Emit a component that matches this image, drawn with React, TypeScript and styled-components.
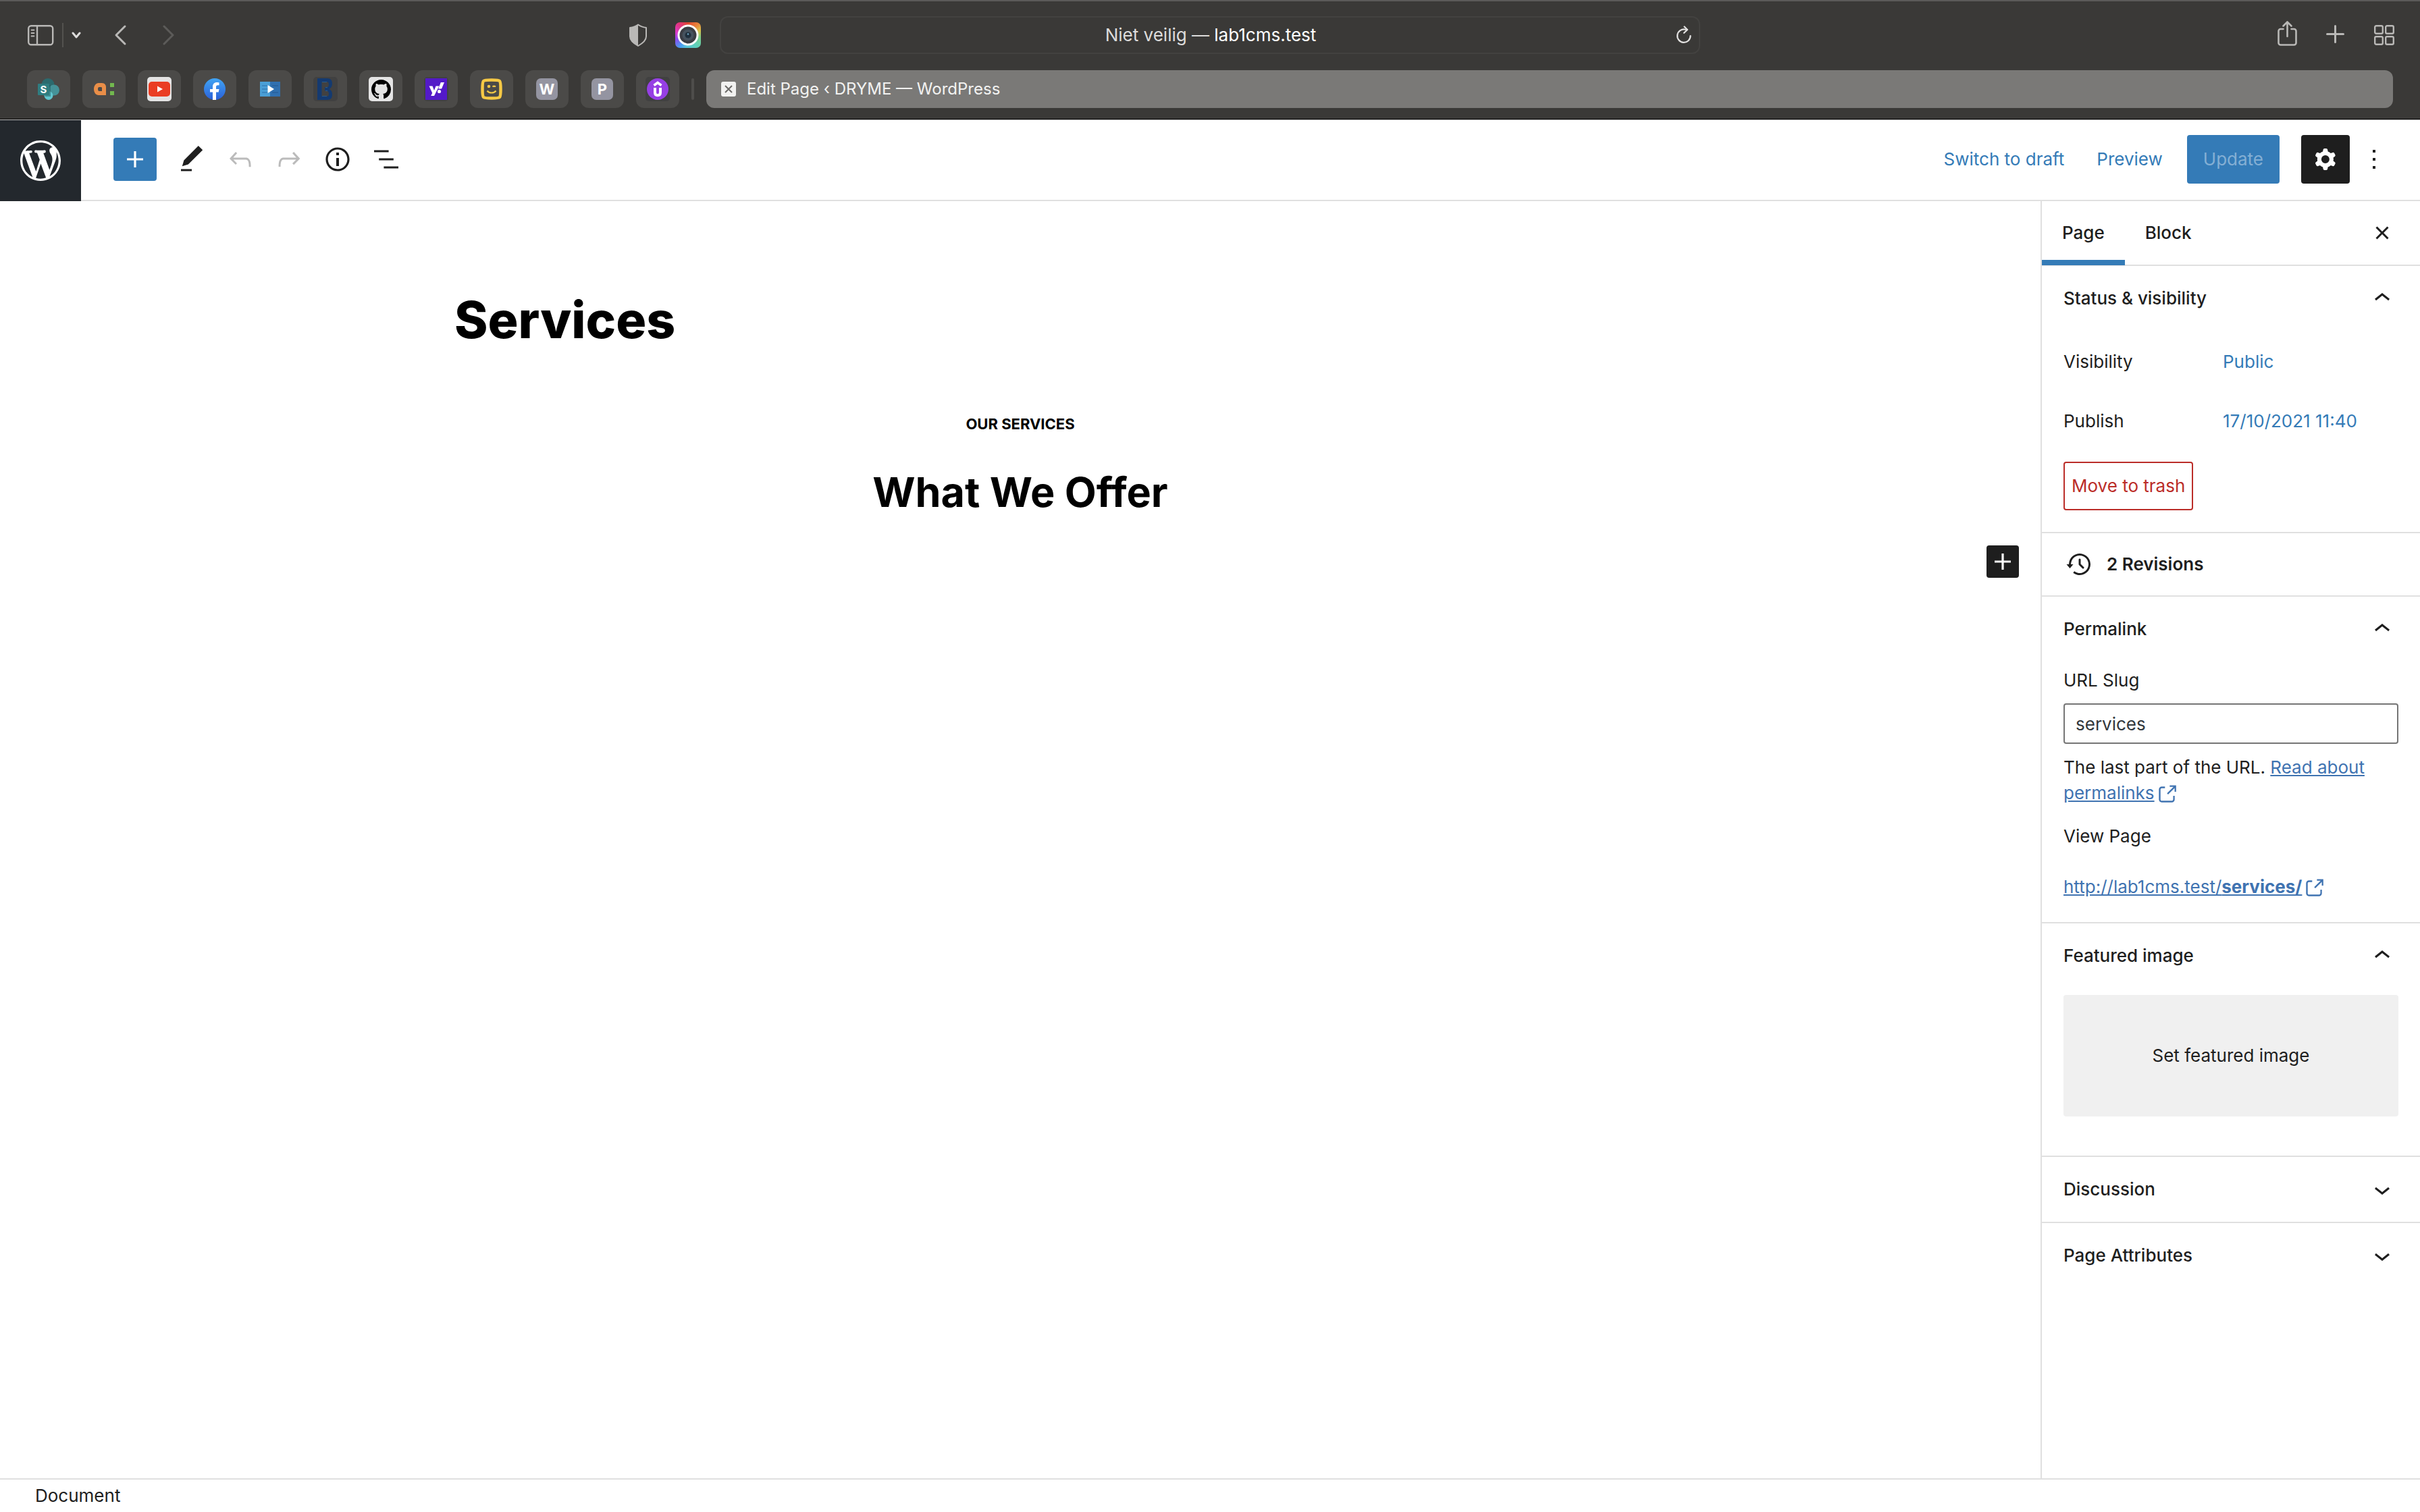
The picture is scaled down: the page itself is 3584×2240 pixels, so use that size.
import React from "react";
import styled, { createGlobalStyle } from "styled-components";

const blue = "#347bb7";
const ink = "#1e1e1e";
const line = "#e0e0e0";
const chromeIcon = "#b9b8b6";

const GlobalStyle = createGlobalStyle`
  * { box-sizing: border-box; }
  body { margin: 0; background: #fff; }
  body, button, input {
    font-family: Inter, "Liberation Sans", sans-serif;
    font-size: 26px;
    line-height: 36px;
    color: ${ink};
  }
  button { margin: 0; padding: 0; border: 0; background: none; cursor: pointer; }
  h1, h2, h3, p { margin: 0; }
  svg { display: block; flex: none; }
`;

const Page = styled.div`
  display: flex;
  flex-direction: column;
  min-height: 100vh;
`;

/* Browser window */
const Chrome = styled.header`
  background: #3a3937;
  border-top: 2px solid #5b5a59;
  border-bottom: 1px solid #000;
`;
const ChromeBar = styled.div`
  display: grid;
  grid-template-columns: 1fr 1452px 1fr;
  align-items: center;
  padding: 22px 38px 24px;
`;
const ChromeGroup = styled.div<{ $end?: boolean }>`
  display: flex;
  align-items: center;
  justify-content: ${(p) => (p.$end ? "flex-end" : "flex-start")};
  gap: ${(p) => (p.$end ? 42 : 12)}px;
`;
const ChromeButton = styled.button<{ $before?: number }>`
  display: flex;
  margin-left: ${(p) => p.$before ?? 0}px;
`;
const ChromeRule = styled.span`
  width: 2px;
  height: 36px;
  background: #53524f;
`;
const Extensions = styled.div`
  display: flex;
  align-items: center;
  gap: 40px;
  margin-left: auto;
  padding-right: 28px;
`;
const AddressBar = styled.div`
  display: flex;
  align-items: center;
  height: 56px;
  padding: 0 10px 0 36px;
  border: 2px solid #434240;
  border-radius: 12px;
`;
const Address = styled.p`
  flex: 1;
  text-align: center;
  color: #dddcdb;
`;
const Host = styled.span`
  color: #fff;
`;
const TabStrip = styled.nav`
  display: flex;
  align-items: center;
  gap: 18px;
  padding: 0 40px 16px;
`;
const PinnedTab = styled.button`
  display: flex;
  align-items: center;
  justify-content: center;
  width: 64px;
  height: 56px;
  border-radius: 12px;
  background: #4b4a48;
`;
const Favicon = styled.span<{ $bg?: string }>`
  display: flex;
  align-items: center;
  justify-content: center;
  width: 36px;
  height: 36px;
  border-radius: 5px;
  background: ${(p) => p.$bg ?? "transparent"};
`;
const LetterIcon = styled.span`
  width: 32px;
  height: 32px;
  border-radius: 7px;
  background: #9494a1;
  color: #fff;
  font-size: 22px;
  font-weight: 700;
  line-height: 32px;
  text-align: center;
`;
const TabRule = styled.span`
  width: 4px;
  height: 32px;
  border-radius: 2px;
  background: #4e4d4b;
`;
const ActiveTab = styled.div`
  display: flex;
  flex: 1;
  align-items: center;
  gap: 16px;
  height: 56px;
  padding: 0 22px;
  border-radius: 12px;
  background: #7a7977;
  color: #f2f2f1;
  font-size: 24px;
`;
const CloseTab = styled.button`
  display: flex;
`;

/* Editor toolbar */
const Toolbar = styled.div`
  display: flex;
  align-items: center;
  height: 121px;
  padding-bottom: 2px;
  border-top: 1px solid #bdbdbd;
  border-bottom: 2px solid ${line};
`;
const HomeLink = styled.a`
  display: flex;
  align-items: center;
  justify-content: center;
  width: 120px;
  height: 120px;
  align-self: flex-start;
  background: #23282d;
`;
const Tools = styled.div`
  display: flex;
  align-items: center;
  gap: 8px;
  padding-left: 48px;
`;
const Tool = styled.button<{ $faded?: boolean }>`
  display: flex;
  align-items: center;
  justify-content: center;
  width: 64px;
  height: 64px;
  color: ${(p) => (p.$faded ? "#bbb" : ink)};
`;
const AddTool = styled(Tool)`
  margin-right: 12px;
  border-radius: 4px;
  background: ${blue};
  color: #fff;
`;
const Actions = styled.div`
  display: flex;
  align-items: center;
  margin-left: auto;
  padding-right: 44px;
`;
const TextButton = styled.button`
  padding: 0 24px;
  color: ${blue};
`;
const UpdateButton = styled.button`
  height: 72px;
  margin: 0 32px 0 12px;
  padding: 0 24px;
  border-radius: 4px;
  background: ${blue};
  color: #84afd4;
`;
const SettingsButton = styled.button`
  display: flex;
  align-items: center;
  justify-content: center;
  width: 72px;
  height: 72px;
  margin-right: 12px;
  border-radius: 4px;
  background: ${ink};
  color: #fff;
`;
const MoreButton = styled.button`
  display: flex;
`;

/* Canvas */
const Workspace = styled.div`
  display: flex;
  flex: 1;
`;
const Canvas = styled.main`
  flex: 1;
  padding: 128px 32px 0;
  color: #000;
`;
const Column = styled.div`
  max-width: 1676px;
  margin: 0 auto;
`;
const PostTitle = styled.h1`
  font-size: 75px;
  font-weight: 800;
  line-height: 96px;
`;
const Kicker = styled.p`
  margin-top: 88px;
  font-size: 22px;
  font-weight: 700;
  line-height: 36px;
  text-align: center;
`;
const BlockHeading = styled.h2`
  margin-top: 44px;
  font-size: 61px;
  font-weight: 700;
  line-height: 78px;
  text-align: center;
`;
const InserterRow = styled.div`
  display: flex;
  justify-content: flex-end;
  margin-top: 40px;
`;
const Inserter = styled.button`
  display: flex;
  border-radius: 4px;
  background: ${ink};
  color: #fff;
`;

/* Settings sidebar */
const Sidebar = styled.aside`
  width: 562px;
  border-left: 2px solid ${line};
`;
const SidebarTabs = styled.div`
  display: flex;
  align-items: center;
  height: 96px;
  padding-right: 32px;
  border-bottom: 2px solid ${line};
`;
const SidebarTab = styled.button<{ $active?: boolean }>`
  height: 96px;
  padding: 0 30px;
  font-weight: 500;
  box-shadow: ${(p) => (p.$active ? `inset 0 -8px 0 ${blue}` : "none")};
`;
const CloseSidebar = styled.button`
  display: flex;
  margin-left: auto;
`;
const Panel = styled.section`
  border-bottom: 2px solid ${line};
  &:last-child { border-bottom: 0; }
`;
const PanelToggle = styled.button`
  display: flex;
  align-items: center;
  justify-content: space-between;
  width: 100%;
  height: 96px;
  padding: 0 32px;
  font-weight: 500;
  text-align: left;
`;
const PanelBody = styled.div<{ $bottom: number }>`
  padding: 10px 32px ${(p) => p.$bottom}px;
`;
const Row = styled.div`
  display: grid;
  grid-template-columns: 204px 1fr;
  align-items: center;
  height: 72px;
  margin-bottom: 16px;
`;
const RowValue = styled.button`
  justify-self: start;
  margin-left: 32px;
  color: ${blue};
  white-space: nowrap;
`;
const TrashButton = styled.button`
  height: 72px;
  margin-top: 8px;
  padding: 0 10px;
  border: 2px solid #bb2d28;
  border-radius: 4px;
  color: #bb2d28;
`;
const Revisions = styled.button`
  display: flex;
  align-items: center;
  gap: 16px;
  width: 100%;
  height: 92px;
  padding: 0 32px;
  font-weight: 600;
`;
const FieldLabel = styled.label`
  display: block;
`;
const SlugInput = styled.input`
  display: block;
  width: 100%;
  height: 60px;
  margin: 16px 0;
  padding: 0 16px;
  border: 2px solid #757575;
  border-radius: 4px;
  color: #32373c;
`;
const Help = styled.p`
  line-height: 38px;
`;
const ViewLabel = styled.h3`
  margin: 26px 0 38px;
  font-size: 26px;
  font-weight: 400;
`;
const Link = styled.a`
  color: #3f73b1;
  text-decoration: underline;
  svg {
    display: inline-block;
    vertical-align: middle;
  }
`;
const FeaturedButton = styled.button`
  width: 100%;
  height: 180px;
  border-radius: 4px;
  background: #f0f0f0;
`;

const Footer = styled.footer`
  height: 50px;
  padding: 6px 52px;
  border-top: 2px solid ${line};
  background: #fff;
`;

const paths = {
  plus: "M18 11.2h-5.2V6h-1.6v5.2H6v1.6h5.2V18h1.6v-5.2H18z",
  edit: "M20.1 5.1L16.9 2 6.2 12.7l-1.3 4.4 4.5-1.3L20.1 5.1zM4 20.8h8v-1.5H4v1.5z",
  undo: "M18.3 11.7c-.6-.6-1.4-.9-2.3-.9H6.7l2.9-3.3-1.1-1-4.5 5L8.5 16l1-1-2.7-2.7H16c.5 0 .9.2 1.3.5 1 1 1 3.4 1 4.5v.3h1.5v-.2c0-1.5 0-4.3-1.5-5.7z",
  redo: "M15.6 6.5l-1.1 1 2.9 3.3H8c-.9 0-1.7.3-2.3.9-1.4 1.5-1.4 4.2-1.4 5.6v.2h1.5v-.3c0-1.1 0-3.5 1-4.5.3-.3.7-.5 1.3-.5h9.2L14.5 15l1.1 1.1 4.6-4.6-4.6-5z",
  info: "M12 3.2c-4.8 0-8.8 3.9-8.8 8.8 0 4.8 3.9 8.8 8.8 8.8 4.8 0 8.8-3.9 8.8-8.8 0-4.8-4-8.8-8.8-8.8zm0 16c-4 0-7.2-3.3-7.2-7.2C4.8 8 8 4.8 12 4.8s7.2 3.3 7.2 7.2c0 4-3.2 7.2-7.2 7.2zM11 17h2v-6h-2v6zm0-8h2V7h-2v2z",
  list: "M13.8 5.2H3v1.5h10.8V5.2zm-3.6 12v1.5H21v-1.5H10.2zm7.2-6H6.6v1.5h10.8v-1.5z",
  cog: "M10.289 4.836A1 1 0 0111.275 4h1.306a1 1 0 01.987.836l.244 1.466c.787.26 1.503.679 2.108 1.218l1.393-.522a1 1 0 011.216.437l.653 1.13a1 1 0 01-.23 1.273l-1.148.944a6.025 6.025 0 010 2.435l1.149.946a1 1 0 01.23 1.272l-.653 1.13a1 1 0 01-1.216.437l-1.394-.522c-.605.54-1.32.958-2.108 1.218l-.244 1.466a1 1 0 01-.987.836h-1.306a1 1 0 01-.986-.836l-.244-1.466a5.995 5.995 0 01-2.108-1.218l-1.394.522a1 1 0 01-1.217-.436l-.653-1.131a1 1 0 01.23-1.272l1.149-.946a6.026 6.026 0 010-2.435l-1.148-.944a1 1 0 01-.23-1.272l.653-1.131a1 1 0 011.217-.437l1.393.522a5.994 5.994 0 012.108-1.218l.244-1.466zM14.929 12a3 3 0 11-6 0 3 3 0 016 0z",
  more: "M13 19h-2v-2h2v2zm0-6h-2v-2h2v2zm0-6h-2V5h2v2z",
  close: "M12 13.06l3.712 3.713 1.061-1.06L13.061 12l3.712-3.712-1.06-1.06L12 10.938 8.288 7.227l-1.061 1.06L10.939 12l-3.712 3.712 1.06 1.061L12 13.061z",
  up: "M6.5 12.4L12 8l5.5 4.4-.9 1.2L12 10l-4.5 3.6-1-1.2z",
  down: "M17.5 11.6L12 16l-5.5-4.4.9-1.2L12 14l4.5-3.6 1 1.2z",
  backup: "M5.5 12h1.75l-2.5 3-2.5-3H4a8 8 0 113.134 6.35l.907-1.194A6.5 6.5 0 105.5 12zm9.53 1.97l-2.28-2.28V8.5a.75.75 0 00-1.5 0V12a.747.747 0 00.218.529l1.282-.84-1.28.842 2.5 2.5a.75.75 0 101.06-1.061z",
  external: "M18.2 17c0 .7-.6 1.2-1.2 1.2H7c-.7 0-1.2-.6-1.2-1.2V7c0-.7.6-1.2 1.2-1.2h3.2V4.2H7C5.5 4.2 4.2 5.5 4.2 7v10c0 1.5 1.2 2.8 2.8 2.8h10c1.5 0 2.8-1.2 2.8-2.8v-3.6h-1.5V17zM14.9 3v1.5h3.7l-6.4 6.4 1.1 1.1 6.4-6.4v3.7h1.5V3h-6.3z",
};

const Icon = ({ name, size = 48 }: { name: keyof typeof paths; size?: number }) => (
  <svg width={size} height={size} viewBox="0 0 24 24" fill="currentColor" aria-hidden="true">
    <path d={paths[name]} fillRule={name === "cog" ? "evenodd" : undefined} />
  </svg>
);

const WordPressLogo = () => (
  <svg width="72" height="72" viewBox="-2 -2 24 24" fill="#fff" aria-hidden="true">
    <path d="M20 10c0-5.51-4.49-10-10-10C4.48 0 0 4.49 0 10c0 5.52 4.48 10 10 10 5.51 0 10-4.48 10-10zM7.78 15.37L4.37 6.22c.55-.02 1.17-.08 1.17-.08.5-.06.44-1.13-.06-1.11 0 0-1.45.11-2.37.11-.18 0-.37 0-.58-.01C4.12 2.69 6.87 1.11 10 1.11c2.33 0 4.45.87 6.05 2.34-.68-.11-1.65.39-1.65 1.58 0 .74.45 1.36.9 2.1.35.61.55 1.36.55 2.46 0 1.49-1.4 5-1.4 5l-3.03-8.37c.54-.02.82-.17.82-.17.5-.05.44-1.25-.06-1.22 0 0-1.44.12-2.38.12-.87 0-2.33-.12-2.33-.12-.5-.03-.56 1.2-.06 1.22l.92.08 1.26 3.41zM17.41 10c.24-.64.74-1.87.43-4.25.7 1.29 1.05 2.71 1.05 4.25 0 3.29-1.73 6.24-4.4 7.78.97-2.59 1.94-5.2 2.92-7.78zM6.1 18.09C3.12 16.65 1.11 13.53 1.11 10c0-1.3.23-2.48.72-3.59C3.25 10.3 4.67 14.2 6.1 18.09zm4.03-6.63l2.58 6.98c-.86.29-1.76.45-2.71.45-.79 0-1.57-.11-2.29-.33.81-2.38 1.62-4.74 2.42-7.1z" />
  </svg>
);

const SidebarIcon = () => (
  <svg width="42" height="32" viewBox="0 0 42 32" fill="none" stroke={chromeIcon} strokeWidth="2.4" aria-hidden="true">
    <rect x="4.2" y="2.2" width="36" height="28" rx="4" />
    <path d="M17 2v28" />
    <path d="M8.5 8.500h4M8.500 13h4M8.500 17.500h4" strokeWidth="1.8" strokeLinecap="round" />
  </svg>
);

const Stroke = ({ d, w, h, color = chromeIcon, width = 3 }: { d: string; w: number; h: number; color?: string; width?: number }) => (
  <svg width={w} height={h} viewBox={`0 0 ${w} ${h}`} fill="none" stroke={color} strokeWidth={width} strokeLinecap="round" strokeLinejoin="round" aria-hidden="true">
    <path d={d} />
  </svg>
);

const ShieldIcon = () => (
  <svg width="30" height="36" viewBox="0 0 30 36" fill="none" aria-hidden="true">
    <path d="M15 2.5c4 3 8 4 12 4.500V20c0 6-5 10-12 14C8 30 3 26 3 20V7c4-.5 8-1.500 12-4.500z" stroke={chromeIcon} strokeWidth="2" strokeLinejoin="round" />
    <path d="M15 2v32C8 30 3 26 3 20V7c4-.5 8-2 12-5z" fill={chromeIcon} />
  </svg>
);

const CameraBadge = styled.span`
  display: flex;
  align-items: center;
  justify-content: center;
  width: 38px;
  height: 38px;
  border-radius: 7px;
  background: conic-gradient(from 0deg, #e0452f, #e8803a 40deg, #d9c54c 70deg, #7fd08a 100deg, #5ed0b8 140deg, #58c4dd 190deg, #4a9cf0 215deg, #8a4bee 250deg, #d93bd0 280deg, #e0357d 320deg, #e0452f);
`;

const Lens = () => (
  <svg width="32" height="32" viewBox="0 0 32 32" aria-hidden="true">
    <circle cx="16" cy="16" r="15.500" fill="#fff" />
    <circle cx="16" cy="16" r="12.500" fill="#3b3d44" />
    <circle cx="16" cy="16" r="8.500" fill="#46525e" />
    <circle cx="16" cy="16" r="4.500" fill="#1f2f3d" />
    <circle cx="16" cy="14.500" r="1.300" fill="#6fa3c0" />
  </svg>
);

const SharePoint = () => (
  <svg width="34" height="40" viewBox="0 0 34 40" aria-hidden="true">
    <circle cx="16" cy="13.500" r="9.500" fill="#2c6a6e" />
    <circle cx="25" cy="21.500" r="8" fill="#459399" />
    <circle cx="17" cy="29.500" r="6.500" fill="#60c6cf" />
    <path d="M3 14h17v17H12z" fill="#22575b" opacity=".5" />
    <rect x="1" y="12" width="17" height="17" rx="1" fill="#2f7d81" />
    <text x="9.500" y="26" fill="#fff" fontFamily="Inter, sans-serif" fontSize="15" fontWeight="700" textAnchor="middle">S</text>
  </svg>
);

const ColonLogo = () => (
  <svg width="30" height="18" viewBox="0 0 30 18" aria-hidden="true">
    <path fillRule="evenodd" d="M7 0H12C16 0 18 3 18 6V18H7C3 18 0 14 0 9S3 0 7 0zM8 6C6.500 6 6 7 6 9s.5 3 2 3h4V7.500C12 6.500 11.500 6 10.500 6z" fill="#e98e48" />
    <path d="M24 0h6v6h-6zM24 12h6v6h-6z" fill="#72b84f" />
  </svg>
);

const YouTube = () => (
  <svg width="32" height="22" viewBox="0 0 32 22" aria-hidden="true">
    <rect width="32" height="22" rx="5" fill="#ea3e24" />
    <path d="M13 6.500l8 4.500-8 4.500z" fill="#fff" />
  </svg>
);

const Facebook = () => (
  <svg width="32" height="32" viewBox="0 0 32 32" aria-hidden="true">
    <defs>
      <linearGradient id="fb" x1="0" y1="0" x2="0" y2="1">
        <stop offset="0" stopColor="#41a5f4" />
        <stop offset="1" stopColor="#2b60d8" />
      </linearGradient>
    </defs>
    <circle cx="16" cy="16" r="16" fill="url(#fb)" />
    <path d="M13 32V20.500H9V16h4v-3.500C13 8.500 15.300 6 19.200 6c1.500 0 3.300.3 3.300.3v4h-2c-2 0-2.500 1.200-2.500 2.500V16h4.500l-.8 4.500H18V32z" fill="#fff" />
  </svg>
);

const VideoBook = () => (
  <svg width="30" height="24" viewBox="0 0 30 24" aria-hidden="true">
    <rect y="1" width="15" height="22" fill="#4a9fd6" />
    <rect x="15" y="1" width="15" height="22" fill="#3070b0" />
    <path d="M3 7h9M3 12h9M3 17h9" stroke="#3680bb" strokeWidth="1.500" />
    <path d="M18 7h9M18 17h9" stroke="#275f9b" strokeWidth="1.500" />
    <path d="M11.500 6l9.500 6-9.500 6z" fill="#fff" />
  </svg>
);

const BadgeB = () => (
  <svg width="24" height="32" viewBox="0 0 24 32" aria-hidden="true">
    <path fillRule="evenodd" d="M0 0H14C20 0 22 3 22 8 22 12 20 14.500 17.500 16 20.500 17.500 22 20 22 24 22 29 20 32 14 32H0zM6.500 5v22H13c3 0 4-1 4-4s-1.500-4.500-4-4.500h-2v-5h2c2.500 0 4-1.500 4-4.500s-1-4-4-4z" fill="#143a70" />
    <path d="M7 5.500h7M12 13.500h3M12 18.500h3M7 26.500h7" stroke="#2a5b8c" strokeWidth="1" />
  </svg>
);

const Octocat = () => (
  <svg width="29" height="29" viewBox="0 0 16 16" fill="#000" aria-hidden="true">
    <path d="M8 0C3.580 0 0 3.580 0 8c0 3.540 2.290 6.530 5.470 7.590.4.070.55-.17.55-.38 0-.19-.01-.82-.01-1.490-2.010.37-2.530-.49-2.690-.94-.09-.23-.48-.94-.82-1.130-.28-.15-.68-.52-.01-.53.63-.01 1.080.58 1.230.82.72 1.210 1.870.87 2.330.66.07-.52.28-.87.51-1.070-1.780-.2-3.640-.89-3.640-3.950 0-.87.31-1.590.82-2.150-.08-.2-.36-1.020.08-2.120 0 0 .67-.21 2.200.82.64-.18 1.320-.27 2-.27s1.360.09 2 .27c1.530-1.040 2.200-.82 2.200-.82.44 1.100.16 1.920.08 2.120.51.56.82 1.270.82 2.150 0 3.070-1.870 3.750-3.650 3.950.29.25.54.73.54 1.480 0 1.070-.01 1.930-.01 2.200 0 .21.15.46.55.38A8.010 8.010 0 0016 8c0-4.420-3.580-8-8-8z" />
  </svg>
);

const Yahoo = () => (
  <svg width="32" height="32" viewBox="0 0 32 32" aria-hidden="true">
    <rect width="32" height="32" fill="#5319c8" />
    <path d="M5.500 11.500h5l2.500 6.500 2.500-6.500h4.800L13 26H8.200l2-4.300zM22.800 6h5.200l-4 9.500h-4.800z" fill="#fff" />
    <circle cx="20.500" cy="19.500" r="2.600" fill="#fff" />
  </svg>
);

const Smiley = () => (
  <svg width="32" height="32" viewBox="0 0 32 32" fill="none" aria-hidden="true">
    <path d="M16 2.500c9 0 11 .5 12 1.500s1.500 3 1.500 12-.5 11-1.500 12-3 1.500-12 1.500-11-.5-12-1.500-1.500-3-1.500-12S3 5 4 4s3-1.500 12-1.500z" stroke="#f6c945" strokeWidth="4.500" />
    <circle cx="12" cy="12" r="2.300" fill="#f6c945" />
    <path d="M17.500 12.500c1.200-1 3.300-1 4.500 0M9.500 18.500c3 4 10 4 13 0" stroke="#f6c945" strokeWidth="2.200" />
  </svg>
);

const Udemy = () => (
  <svg width="32" height="32" viewBox="0 0 32 32" fill="none" aria-hidden="true">
    <circle cx="16" cy="16" r="16" fill="#963fe4" />
    <path d="M10.500 10.500L16 6.500l5.500 4" stroke="#fff" strokeWidth="3.600" />
    <path d="M12 14v7c0 2.500 1.500 4.200 4 4.200s4-1.700 4-4.200v-7" stroke="#fff" strokeWidth="4" />
  </svg>
);

const CloseBadge = () => (
  <svg width="22" height="22" viewBox="0 0 22 22" aria-hidden="true">
    <rect width="22" height="22" rx="3" fill="#f2f2f1" />
    <path d="M6 6l10 10M16 6L6 16" stroke="#6b6a68" strokeWidth="2" />
  </svg>
);

const ReloadIcon = () => (
  <svg width="24" height="28" viewBox="0 0 24 28" fill="none" stroke="#e3e2e1" strokeWidth="2.200" strokeLinecap="round" strokeLinejoin="round" aria-hidden="true">
    <path d="M21.500 15A9.700 9.700 0 1 1 14 5.700L16.500 6" />
    <path d="M12.500 1.500l4.500 4.500-5 4.800" />
  </svg>
);

const ShareIcon = () => (
  <svg width="30" height="42" viewBox="0 0 30 42" fill="none" stroke={chromeIcon} strokeWidth="2.600" strokeLinecap="round" strokeLinejoin="round" aria-hidden="true">
    <path d="M9.500 12H5.500a3 3 0 0 0-3 3V32.500a3 3 0 0 0 3 3h20a3 3 0 0 0 3-3V15a3 3 0 0 0-3-3h-4" />
    <path d="M15.500 23V2M9.500 7.500l6-6 6 6" />
  </svg>
);

const GridIcon = () => (
  <svg width="30" height="30" viewBox="0 0 30 30" fill="none" stroke={chromeIcon} strokeWidth="2.400" aria-hidden="true">
    <rect x="1.200" y="1.200" width="11.600" height="11.600" rx="2" />
    <rect x="17.200" y="1.200" width="11.600" height="11.600" rx="2" />
    <rect x="1.200" y="17.200" width="11.600" height="11.600" rx="2" />
    <rect x="17.200" y="17.200" width="11.600" height="11.600" rx="2" />
  </svg>
);

const pinned: { label: string; bg?: string; art: React.ReactNode }[] = [
  { label: "SharePoint", art: <SharePoint /> },
  { label: "Toledo", art: <ColonLogo /> },
  { label: "YouTube", bg: "#e4e4e4", art: <YouTube /> },
  { label: "Facebook", art: <Facebook /> },
  { label: "Video", art: <VideoBook /> },
  { label: "Bibliotheek", bg: "#414141", art: <BadgeB /> },
  { label: "GitHub", bg: "#e4e4e4", art: <Octocat /> },
  { label: "Yahoo", bg: "#414141", art: <Yahoo /> },
  { label: "Telenet", art: <Smiley /> },
  { label: "W", art: <LetterIcon>W</LetterIcon> },
  { label: "P", art: <LetterIcon>P</LetterIcon> },
  { label: "Udemy", bg: "#414141", art: <Udemy /> },
];

function BrowserChrome() {
  return (
    <Chrome>
      <ChromeBar>
        <ChromeGroup>
          <ChromeButton aria-label="Sidebar"><SidebarIcon /></ChromeButton>
          <ChromeRule />
          <ChromeButton aria-label="Tab groups">
            <Stroke w={14} h={12} d="M2 3l5 6 5-6" color="#dddcdb" />
          </ChromeButton>
          <ChromeButton aria-label="Back" $before={36}>
            <Stroke w={20} h={32} d="M17 3L4 16l13 13" />
          </ChromeButton>
          <ChromeButton aria-label="Forward" $before={40}>
            <Stroke w={20} h={32} d="M3 3l13 13L3 29" color="#5c5b59" />
          </ChromeButton>
          <Extensions>
            <ChromeButton aria-label="Privacy report"><ShieldIcon /></ChromeButton>
            <ChromeButton aria-label="Camera extension"><CameraBadge><Lens /></CameraBadge></ChromeButton>
          </Extensions>
        </ChromeGroup>
        <AddressBar>
          <Address>Niet veilig — <Host>lab1cms.test</Host></Address>
          <ChromeButton aria-label="Reload"><ReloadIcon /></ChromeButton>
        </AddressBar>
        <ChromeGroup $end>
          <ChromeButton aria-label="Share"><ShareIcon /></ChromeButton>
          <ChromeButton aria-label="New tab"><Stroke w={30} h={30} d="M14.500 1.500v24M2.500 13.500h24" /></ChromeButton>
          <ChromeButton aria-label="Tab overview"><GridIcon /></ChromeButton>
        </ChromeGroup>
      </ChromeBar>
      <TabStrip>
        {pinned.map((tab) => (
          <PinnedTab key={tab.label} aria-label={tab.label}>
            <Favicon $bg={tab.bg}>{tab.art}</Favicon>
          </PinnedTab>
        ))}
        <TabRule />
        <ActiveTab>
          <CloseTab aria-label="Close tab"><CloseBadge /></CloseTab>
          Edit Page ‹ DRYME — WordPress
        </ActiveTab>
      </TabStrip>
    </Chrome>
  );
}

export default function App() {
  return (
    <Page>
      <GlobalStyle />
      <BrowserChrome />
      <Toolbar>
        <HomeLink href="#" aria-label="View Pages"><WordPressLogo /></HomeLink>
        <Tools>
          <AddTool aria-label="Add block"><Icon name="plus" /></AddTool>
          <Tool aria-label="Tools"><Icon name="edit" /></Tool>
          <Tool aria-label="Undo" $faded><Icon name="undo" /></Tool>
          <Tool aria-label="Redo" $faded><Icon name="redo" /></Tool>
          <Tool aria-label="Details"><Icon name="info" /></Tool>
          <Tool aria-label="List view"><Icon name="list" /></Tool>
        </Tools>
        <Actions>
          <TextButton>Switch to draft</TextButton>
          <TextButton>Preview</TextButton>
          <UpdateButton>Update</UpdateButton>
          <SettingsButton aria-label="Settings"><Icon name="cog" /></SettingsButton>
          <MoreButton aria-label="Options"><Icon name="more" /></MoreButton>
        </Actions>
      </Toolbar>
      <Workspace>
        <Canvas>
          <Column>
            <PostTitle>Services</PostTitle>
            <Kicker>OUR SERVICES</Kicker>
            <BlockHeading>What We Offer</BlockHeading>
          </Column>
          <InserterRow>
            <Inserter aria-label="Add block"><Icon name="plus" /></Inserter>
          </InserterRow>
        </Canvas>
        <Sidebar>
          <SidebarTabs>
            <SidebarTab $active>Page</SidebarTab>
            <SidebarTab>Block</SidebarTab>
            <CloseSidebar aria-label="Close settings"><Icon name="close" /></CloseSidebar>
          </SidebarTabs>
          <Panel>
            <PanelToggle>Status &amp; visibility<Icon name="up" /></PanelToggle>
            <PanelBody $bottom={32}>
              <Row>
                <span>Visibility</span>
                <RowValue>Public</RowValue>
              </Row>
              <Row>
                <span>Publish</span>
                <RowValue>17/10/2021 11:40</RowValue>
              </Row>
              <TrashButton>Move to trash</TrashButton>
            </PanelBody>
          </Panel>
          <Panel>
            <Revisions><Icon name="backup" />2 Revisions</Revisions>
          </Panel>
          <Panel>
            <PanelToggle>Permalink<Icon name="up" /></PanelToggle>
            <PanelBody $bottom={32}>
              <FieldLabel htmlFor="slug">URL Slug</FieldLabel>
              <SlugInput id="slug" defaultValue="services" />
              <Help>
                The last part of the URL.{" "}
                <Link href="#">Read about permalinks<Icon name="external" size={36} /></Link>
              </Help>
              <ViewLabel>View Page</ViewLabel>
              <Help>
                <Link href="#">http://lab1cms.test/<b>services/</b><Icon name="external" size={36} /></Link>
              </Help>
            </PanelBody>
          </Panel>
          <Panel>
            <PanelToggle>Featured image<Icon name="up" /></PanelToggle>
            <PanelBody $bottom={58}>
              <FeaturedButton>Set featured image</FeaturedButton>
            </PanelBody>
          </Panel>
          <Panel>
            <PanelToggle>Discussion<Icon name="down" /></PanelToggle>
          </Panel>
          <Panel>
            <PanelToggle>Page Attributes<Icon name="down" /></PanelToggle>
          </Panel>
        </Sidebar>
      </Workspace>
      <Footer>Document</Footer>
    </Page>
  );
}
